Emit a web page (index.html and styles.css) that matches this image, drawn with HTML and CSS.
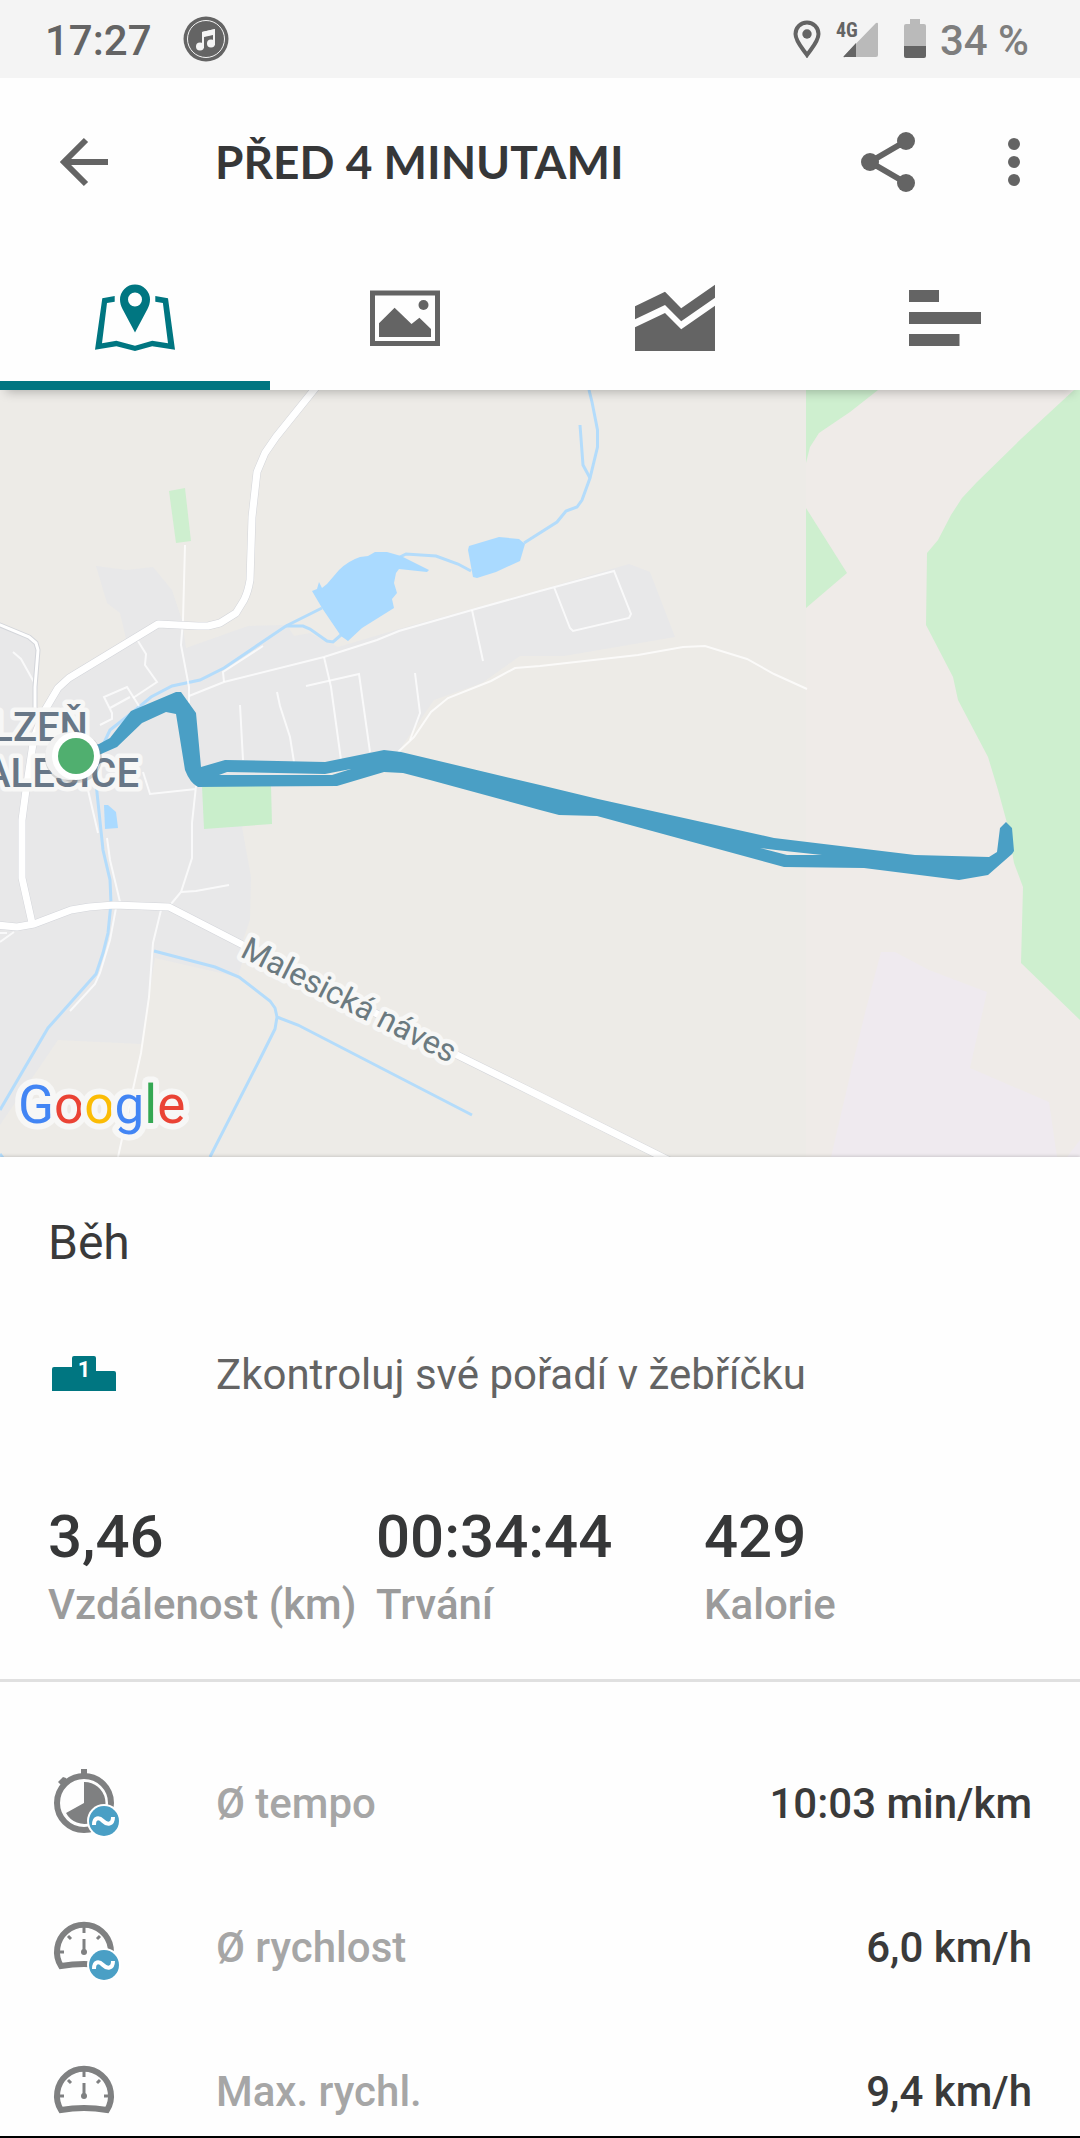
FILE: index.html
```html
<!DOCTYPE html>
<html lang="cs">
<head>
<meta charset="utf-8">
<meta name="viewport" content="width=device-width, initial-scale=1">
<title>Běh</title>
<link rel="stylesheet" href="styles.css">
</head>
<body>
<div class="statusbar">
  <span class="clock">17:27</span>
  <svg class="music" width="46" height="46" viewBox="0 0 46 46" aria-hidden="true">
    <circle cx="23" cy="23" r="22.500" fill="#646464"/>
    <circle cx="23" cy="23" r="18.500" fill="none" stroke="#f4f4f4"/>
    <path d="M19 16 32 13V29H30V19L21 21V32H19Z" fill="#f4f4f4"/>
    <path d="M19 16 32 13V18L19 21Z" fill="#f4f4f4"/>
    <circle cx="17" cy="30.500" r="4" fill="#f4f4f4"/>
    <circle cx="28" cy="27.500" r="4" fill="#f4f4f4"/>
  </svg>
  <svg class="locate" width="28" height="38" viewBox="0 0 28 38" aria-hidden="true">
    <path d="M14 2.500C7.500 2.500 2.500 7.500 2.500 14 2.500 21.500 10 29 14 35 18 29 25.500 21.500 25.500 14 25.500 7.500 20.500 2.500 14 2.500Z" fill="none" stroke="#646464" stroke-width="4"/>
    <circle cx="14" cy="14" r="4.700" fill="#646464"/>
  </svg>
  <svg class="signal" width="44" height="40" viewBox="0 0 44 40" role="img" aria-label="4G">
    <path d="M8 37 40 4Q42 3 42 5V36Q42 38 40 38H9Q6.500 38.500 8 37Z" fill="#bababa"/>
    <path d="M8 37 20 24V38H9Q6.500 38.500 8 37Z" fill="#646464"/>
    <text class="net" x="0" y="18">4G</text>
  </svg>
  <svg class="battery" width="22" height="40" viewBox="0 0 22 40" aria-hidden="true">
    <path d="M6 0H16V5H20Q22 5 22 7V27H0V7Q0 5 2 5H6Z" fill="#bababa"/>
    <path d="M0 27H22V37Q22 39 20 39H2Q0 39 0 37Z" fill="#646464"/>
  </svg>
  <span class="percent">34 %</span>
</div>

<header class="header">
  <div class="toolbar">
    <button class="icon-button" type="button" aria-label="Zpět">
      <svg width="72" height="72" viewBox="0 0 72 72"><path d="M60 36H17M38 14 16 36 38 58" fill="none" stroke="#646464" stroke-width="6"/></svg>
    </button>
    <h1 class="title">PŘED 4 MINUTAMI</h1>
    <div class="actions">
      <button class="icon-button" type="button" aria-label="Sdílet">
        <svg width="72" height="72" viewBox="0 0 72 72" fill="#646464"><path d="M54 15 18 36 54 57" fill="none" stroke="#646464" stroke-width="6"/><circle cx="54" cy="15" r="9"/><circle cx="18" cy="36" r="9"/><circle cx="54" cy="57" r="9"/></svg>
      </button>
      <button class="icon-button" type="button" aria-label="Další možnosti">
        <svg width="72" height="72" viewBox="0 0 72 72" fill="#646464"><circle cx="36" cy="18" r="6"/><circle cx="36" cy="36" r="6"/><circle cx="36" cy="54" r="6"/></svg>
      </button>
    </div>
  </div>
  <div class="tabs" role="tablist">
    <button class="tab tab-active" type="button" role="tab" aria-selected="true" aria-label="Mapa">
      <svg width="80" height="80" viewBox="95 278 80 80" fill="#007681">
        <path d="M114.700 296 102.300 298.300 95 349.700 116.400 346.300 135 351 152.200 346.300 175 349.700 168 298.300 155.300 296V301.700L162.900 303 168 343.300 152.200 340.700 135 345.700 116.400 340.700 102 343.300 107 303 114.700 301.700Z"/>
        <path fill-rule="evenodd" d="M135 284.500A15 15 0 0 0 120 299.500C120 303 121 306 122.500 309L135 332.500 147.500 309C149 306 150 303 150 299.500A15 15 0 0 0 135 284.500ZM135 292.500A7 7 0 1 1 135 306.500 7 7 0 0 1 135 292.500Z"/>
      </svg>
    </button>
    <button class="tab" type="button" role="tab" aria-selected="false" aria-label="Fotky">
      <svg width="80" height="80" viewBox="365 278 80 80" fill="#646464">
        <path d="M372.500 293H437.500V343.500H372.500Z" fill="none" stroke="#646464" stroke-width="5"/>
        <path d="M379 323.300 394.600 307.700 411.500 324 419.400 317.700 431 329V337H379Z"/>
        <circle cx="423.500" cy="305" r="5"/>
      </svg>
    </button>
    <button class="tab" type="button" role="tab" aria-selected="false" aria-label="Graf">
      <svg width="80" height="80" viewBox="635 278 80 80" fill="#646464">
        <path d="M635 306.300 665 291.700 681.200 308.300 715 284.700V297.700L681.200 321.300 665 305 635 319.300Z"/>
        <path d="M635 327.300 665 313 681.200 329.300 715 305.700V351H635Z"/>
      </svg>
    </button>
    <button class="tab" type="button" role="tab" aria-selected="false" aria-label="Mezičasy">
      <svg width="80" height="80" viewBox="905 278 80 80" fill="#646464">
        <path d="M909 290H939V302H909ZM909 312H981V324H909ZM909 334H959.500V346H909Z"/>
      </svg>
    </button>
  </div>
</header>

<svg class="map" viewBox="0 390 1080 767" role="img" aria-label="Mapa trasy">
  <rect x="0" y="390" width="806" height="767" fill="#edebe7"/>
  <rect x="806" y="390" width="274" height="767" fill="#efebe8"/>

  <!-- built-up area -->
  <path fill="#e8e8e9" d="M0 626 29 637 38 650 37 712 45 710 69 678 127 643 120 613 107 603 96 566 127 570 153 567 172 590 182 620 186 648 248 626 287 625 294 636 310 633 338 647 399 629 540 590 629 564 650 572 675 637 564 656 520 656 482 683 434 700 398 752 271 787 242 827 251 877 250 920 242 943V963L238 977 155 958 141 1044 58 1040 0 1125Z"/>

  <!-- greenery and industrial area -->
  <g fill="#ceefcf">
    <path d="M169 491 185 488 191 541 176 543Z"/>
    <path d="M202 786H271L272 824 204 829Z" fill="#c9eecb"/>
    <path d="M806 390H878L850 412 819 433 810 447 806 463Z"/>
    <path d="M806 508 847 573 806 608Z"/>
    <path d="M1074 390 1022 438 977 482 962 498 951 515 938 540 927 553 926 625 953 677 958 700 988 757 998 790 1007 823 1014 863 1023 887 1021 963 1080 1020V390Z"/>
  </g>
  <path fill="#efeaef" d="M881 952H895L929 970 987 992 970 1068 1049 1102 1057 1157H831L852 1067 865 1013ZM1067 1157 1080 1140V1157Z"/>

  <!-- water -->
  <g fill="none" stroke="#b4dcfb" stroke-width="3">
    <path d="M589 390 592 402 597.500 430V447L590 478 582 500 577 507 566 511 557 522 524 543"/>
    <path d="M580 425 583 465 590 478"/>
    <path d="M471 571 458 564 436 556 406 554 400 557"/>
    <path d="M322 608 286 626 224 668 200 680 172 686 151 697 133 712 110 730 102 747 96 783 103 850 110 880 111 903 108 933 103 953 96 974 48 1028 0 1110"/>
    <path d="M286 626H303L310 629 327 641 333 642 341 635"/>
    <path d="M154 951 215 967 239 977 270 1001 275 1008 277 1017 275 1029 262 1055 210 1157M277 1017 298 1025 472 1115M0 1154 3 1158"/>
  </g>
  <g fill="#aadaff">
    <path d="M312 591 317 589 319 582 322 588 327 584 339 570Q348 561 360 557L368 556 375 552H387L401 556 429 570 427 572 399 569 396 573 394 583 397 593 392 599 394 608 362 628 348 641 341 636 322 608Z"/>
    <path d="M469 546 499 537 519 539 525 544 520 561 496 572 477 578 473 577 468 550Z"/>
    <path d="M104 805H108L116 812 118 828 105 829Z"/>
  </g>

  <!-- side streets -->
  <g fill="none" stroke="#fff" stroke-width="2" stroke-opacity=".75">
    <path d="M189 696 224 682 324 657 377 640 399 631 472 610 540 591 614 571 631 614 629 618 573 631 570 628 554 587"/>
    <path d="M185 545 183 620 181 645 189 687V703"/>
    <path d="M472 610 483 661M224 682 223 672 263 646"/>
    <path d="M138 641 146 654 145 665 157 682 133 698"/>
    <path d="M139 706 127 687 104 697 112 713V719L100 725M110 708 130 697"/>
    <path d="M13 652 21 659 35 684M240 705 243 760"/>
    <path d="M277 692 280 706 290 737 294 762M324 657 331 687 341 760"/>
    <path d="M306 686 359 674 370 752M415 673 420 713 410 740"/>
    <path d="M398 752 414 737 431 712 448 698 491 681 515 668 540 666 638 655 683 647 705 646 747 659 774 674 807 689"/>
    <path d="M196 786 192 823V858L181 892 171 904M181 892 196 891 229 885M196 789 150 794 143 772"/>
    <path d="M88 790 98 833M107 838 110 860 120 902M116 908 110 940 100 973 95 984 70 1011"/>
    <path d="M161 910 153 943 149 997 141 1053 118 1157M0 942 14 932M0 933H7"/>
  </g>

  <!-- main roads, casing under surface -->
  <g fill="none" stroke-linejoin="round">
    <path stroke="#d3d5da" stroke-width="8" d="M317 386 276 437 265 453 257 472 252 517 250 580Q248 592 244 600L236 613 220 623 208 626H198L158 624 69 678 58 688 45 710 34 737 29 770 26 790 22 820V878L32 923"/>
    <path stroke="#d3d5da" stroke-width="8" d="M-4 925 17 927 34 924 71 910 89 907 114 905 169 907 241 944 451 1052 540 1096 670 1161"/>
    <path stroke="#d3d5da" stroke-width="5" d="M-4 624 0 625 29 637 36 643 38 650 35 687V712"/>
    <path stroke="#fff" stroke-width="7" d="M317 386 276 437 265 453 257 472 252 517 250 580Q248 592 244 600L236 613 220 623 208 626H198L158 624 69 678 58 688 45 710 34 737 29 770 26 790 22 820V878L32 923"/>
    <path stroke="#fff" stroke-width="7" d="M-4 925 17 927 34 924 71 910 89 907 114 905 169 907 241 944 451 1052 540 1096 670 1161"/>
    <path stroke="#fff" stroke-width="3" d="M-4 624 0 625 29 637 36 643 38 650 35 687V712"/>
  </g>

  <text class="place" x="88" y="741">PLZEŇ</text>
  <text class="place" x="139" y="787">MALESICE</text>
  <text class="road" transform="translate(239 956) rotate(27)">Malesická náves</text>

  <!-- run track -->
  <path fill="#4a9fc5" fill-rule="evenodd" d="M76 750 99 744 110 738 131 711 176 692H181L196 713 201 767 225 760 325 762 384 750 401 752 540 785 598 799 774 838 915 855 989 857 997 852 1000 828 1006 822 1012 828 1014 851 1012 854 988 875 959 880 864 868 784 867 597 816 559 815 540 810 430 780 403 773 384 772 337 786 198 787Q190 783 185 770L176 714 166 712 142 723 117 747 76 765ZM219 775 227 772 325 774 351 769 332 775ZM760 848 776 850 822 855H787Z"/>
  <circle cx="70" cy="758" r="25" fill="#999" opacity=".35"/>
  <circle cx="77" cy="758" r="25" fill="#888" opacity=".3"/>
  <circle cx="69" cy="756" r="24" fill="#f1f1f1"/>
  <circle cx="76" cy="756" r="24" fill="#fff"/>
  <circle cx="76" cy="756" r="18" fill="#50af6f"/>

  <text class="google" x="18" y="1123"><tspan fill="#4285f4">G</tspan><tspan fill="#ea4335">o</tspan><tspan fill="#fbbc05">o</tspan><tspan fill="#4285f4">g</tspan><tspan fill="#34a853">l</tspan><tspan fill="#ea4335">e</tspan></text>
</svg>

<main class="content">
  <section class="summary">
    <h2 class="sport">Běh</h2>
    <a class="row leaderboard" href="#leaderboard">
      <svg width="80" height="80" viewBox="0 0 80 80" aria-hidden="true">
        <path d="M4 56V34Q4 32 6 32H24V23Q24 21 26 21H46Q48 21 48 23V36H66Q68 36 68 38V56Z" fill="#007681"/>
        <text class="rank" x="36" y="42">1</text>
      </svg>
      <span>Zkontroluj své pořadí v žebříčku</span>
    </a>
    <dl class="stats">
      <div class="stat"><dt>Vzdálenost (km)</dt><dd>3,46</dd></div>
      <div class="stat"><dt>Trvání</dt><dd>00:34:44</dd></div>
      <div class="stat"><dt>Kalorie</dt><dd>429</dd></div>
    </dl>
  </section>

  <dl class="details">
    <div class="row">
      <svg width="80" height="80" viewBox="0 0 80 80" aria-hidden="true">
        <circle cx="36" cy="39" r="27" fill="none" stroke="#7f8081" stroke-width="6"/>
        <path d="M33 5H39V13H33ZM10 18 15 13 18 14 20 17 14 22Z" fill="#7f8081"/>
        <path d="M36 39V18A21 21 0 1 1 18 49Z" fill="#7f8081"/>
        <circle cx="56" cy="57" r="17" fill="#fff"/>
        <circle cx="56" cy="57" r="15" fill="#4a9fc5"/>
        <path d="M46 61C46 53 51 53 55 57S65 61 65 53" fill="none" stroke="#fff" stroke-width="4"/>
      </svg>
      <dt>Ø tempo</dt><dd>10:03 min/km</dd>
    </div>
    <div class="row">
      <svg width="80" height="80" viewBox="0 0 80 80" aria-hidden="true">
        <path d="M13 58A27 27 0 1 1 59 58Q36 54 13 58Z" fill="none" stroke="#7f8081" stroke-width="6"/>
        <path d="M36 19V25M12 44H16M56 44H60M20 28 23 31M52 28 49 31M36 31V44" fill="none" stroke="#7f8081" stroke-width="3"/>
        <circle cx="36" cy="44" r="3" fill="#7f8081"/>
        <circle cx="56" cy="57" r="17" fill="#fff"/>
        <circle cx="56" cy="57" r="15" fill="#4a9fc5"/>
        <path d="M46 61C46 53 51 53 55 57S65 61 65 53" fill="none" stroke="#fff" stroke-width="4"/>
      </svg>
      <dt>Ø rychlost</dt><dd>6,0 km/h</dd>
    </div>
    <div class="row">
      <svg width="80" height="80" viewBox="0 0 80 80" aria-hidden="true">
        <path d="M13 58A27 27 0 1 1 59 58Q36 54 13 58Z" fill="none" stroke="#7f8081" stroke-width="6"/>
        <path d="M36 19V25M12 44H16M56 44H60M20 28 23 31M52 28 49 31M36 31V44" fill="none" stroke="#7f8081" stroke-width="3"/>
        <circle cx="36" cy="44" r="3" fill="#7f8081"/>
      </svg>
      <dt>Max. rychl.</dt><dd>9,4 km/h</dd>
    </div>
  </dl>
</main>
</body>
</html>
```
FILE: styles.css
```css
* {
  box-sizing: border-box;
}

body {
  margin: 0;
  background: #fefefe;
  color: #3a3a3a;
  font-family: Roboto, "Liberation Sans", sans-serif;
  font-size: 42px;
  line-height: 48px;
}

svg {
  display: block;
  flex: none;
}

h1,
h2,
dl,
dd {
  margin: 0;
}

button {
  padding: 0;
  border: 0;
  background: none;
}

.statusbar {
  display: flex;
  align-items: center;
  height: 78px;
  padding: 0 51px 0 45px;
  background: #f4f4f4;
  color: #646464;
  font-weight: 500;
}

.clock,
.percent {
  padding-top: 4px;
}

.music {
  margin-left: 31px;
}

.locate {
  margin-left: auto;
}

.signal {
  margin-left: 15px;
}

.net {
  fill: #646464;
  font-family: "Roboto Condensed", Roboto, sans-serif;
  font-size: 20px;
  font-weight: 700;
}

.battery {
  margin: 0 14px 0 24px;
}

.percent {
  color: #7e7e7e;
}

.header {
  position: relative;
  z-index: 1;
  background: #fefefe;
  box-shadow: 0 8px 10px -6px rgba(0, 0, 0, 0.25);
}

.toolbar {
  display: flex;
  align-items: center;
  height: 168px;
  padding: 0 30px 0 48px;
}

.title {
  margin-left: 95px;
  color: #363738;
  font-family: Lato, "Open Sans", sans-serif;
  font-size: 46px;
  font-weight: 700;
  line-height: 56px;
}

.actions {
  display: flex;
  gap: 54px;
  margin-left: auto;
}

.tabs {
  display: grid;
  grid-template-columns: repeat(4, 1fr);
}

.tab {
  display: flex;
  align-items: center;
  justify-content: center;
  height: 144px;
}

.tab-active {
  box-shadow: inset 0 -9px #007681;
}

.map {
  width: 100%;
  height: auto;
}

.place,
.road,
.google {
  stroke: #f7f7f6;
  stroke-linejoin: round;
  paint-order: stroke;
}

.place {
  fill: #687787;
  stroke-width: 9px;
  font-size: 40px;
  font-weight: 500;
  text-anchor: end;
}

.road {
  fill: #6b7a80;
  stroke-width: 9px;
  font-size: 32px;
}

.google {
  stroke-width: 12px;
  font-size: 53px;
  font-weight: 400;
}

.content {
  position: relative;
  border-bottom: 2px solid #000;
  background: #fefefe;
  box-shadow: 0 -1px 3px rgba(0, 0, 0, 0.15);
}

.summary {
  padding: 58px 48px 50px;
  border-bottom: 3px solid #e0e0e0;
}

.sport {
  font-size: 48px;
  font-weight: 400;
  line-height: 56px;
}

.row {
  display: flex;
  align-items: center;
  gap: 88px;
}

.leaderboard {
  margin: 64px 0 82px;
  color: #646464;
  text-decoration: none;
}

.rank {
  fill: #fff;
  font-size: 22px;
  font-weight: 700;
  text-anchor: middle;
}

.stats {
  display: grid;
  grid-template-columns: repeat(3, 1fr);
}

.stat {
  display: flex;
  flex-direction: column-reverse;
  gap: 4px;
  white-space: nowrap;
}

.stat dt {
  color: #9b9b9b;
  font-weight: 500;
}

.stat dd {
  color: #363738;
  font-size: 60px;
  font-weight: 500;
  line-height: 80px;
}

.details {
  display: grid;
  gap: 64px;
  padding: 82px 48px 4px;
  font-weight: 500;
}

.details dt {
  color: #a6a6a6;
}

.details dd {
  margin-left: auto;
}
```
